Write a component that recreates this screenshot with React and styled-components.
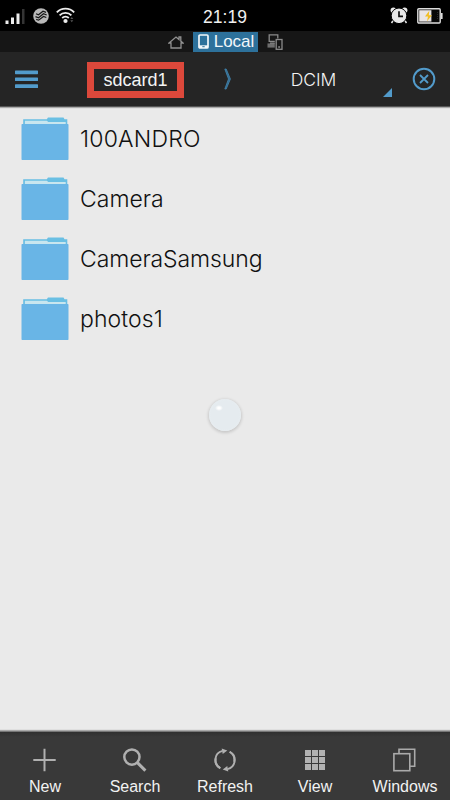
import React, { useState } from 'react';
import styled, { createGlobalStyle } from 'styled-components';

const GlobalStyle = createGlobalStyle`
  body {
    margin: 0;
    background: #eaeaea;
    font-family: 'Liberation Sans', Arial, sans-serif;
  }
`;

// Styled components
const Screen = styled.div`
  display: flex;
  flex-direction: column;
  width: 450px;
  height: 800px;
  overflow: hidden;
  background: #eaeaea;
  position: relative;
`;

const StatusBar = styled.header`
  display: grid;
  grid-template-columns: 1fr auto 1fr;
  align-items: center;
  height: 31px;
  box-sizing: border-box;
  background: #000;
  color: #f0f0f0;
`;

const StatusIcons = styled.div`
  display: flex;
  align-items: center;
  justify-content: ${(props) => (props.$end ? 'flex-end' : 'flex-start')};
  gap: ${(props) => (props.$end ? '9px' : '7px')};
  padding: ${(props) => (props.$end ? '0 7px 0 0' : '0 0 0 5px')};
`;

const Clock = styled.span`
  font-size: 17.5px;
  line-height: 20px;
  padding-top: 3px;
`;

const TabStrip = styled.nav`
  display: flex;
  justify-content: center;
  align-items: center;
  height: 21px;
  background: #161616;
`;

const Tab = styled.button`
  display: flex;
  align-items: center;
  justify-content: center;
  gap: 5px;
  width: ${(props) => props.$width};
  height: 20px;
  padding: ${(props) => props.$padding || '0'};
  border: none;
  background: ${(props) => (props.$active ? '#2d719b' : 'transparent')};
  color: #f2f7fa;
  font-family: inherit;
  font-size: 17px;
  line-height: 20px;
`;

const Toolbar = styled.div`
  display: grid;
  grid-template-columns: 52px 167px 16px 157px 58px;
  align-items: center;
  height: 54px;
  background: #252525;
  border-bottom: 1px solid #555;
  box-shadow: 0 1px 1px #aaa;
`;

const ToolButton = styled.button`
  display: flex;
  border: none;
  background: none;
  padding: ${(props) => props.$padding || '0'};
`;

const Crumb = styled.div`
  display: grid;
  grid-template-columns: 1fr auto 1fr;
  align-items: center;
  height: 54px;
  color: #f4f4f4;
  font-size: 18px;
`;

const CrumbName = styled.span`
  grid-column: 2;
  padding-top: 1px;
  font-family: Inter, 'Liberation Sans', sans-serif;
  font-size: 17.5px;
  font-weight: 300;
  line-height: 22px;
`;

const MarkedName = styled.span`
  grid-column: 2;
  box-sizing: border-box;
  width: 97px;
  height: 36px;
  margin-top: 2px;
  border: 7px solid #dc483b;
  line-height: 22px;
  text-align: center;
`;

const Corner = styled.span`
  grid-column: 3;
  justify-self: end;
  align-self: end;
  margin-bottom: 9px;
  border-left: 9px solid transparent;
  border-bottom: 9px solid #529bcb;
`;

const FileList = styled.ul`
  flex: 1;
  margin: 0;
  padding: 2px 0 0;
  list-style: none;
`;

const FileRow = styled.li`
  display: flex;
  align-items: center;
  gap: 11px;
  height: 60px;
  padding-left: 21px;
`;

const FileName = styled.span`
  padding-bottom: 1px;
  font-family: Inter, 'Liberation Sans', sans-serif;
  font-size: 23px;
  font-weight: 300;
  line-height: 30px;
  letter-spacing: ${(props) => props.$spacing};
  color: #111;
`;

const TouchDot = styled.div`
  position: absolute;
  left: 209px;
  top: 399px;
  width: 32px;
  height: 32px;
  border-radius: 50%;
  background: radial-gradient(ellipse 4px 3px at 10px 9px, #fff 30%, transparent 100%),
    radial-gradient(circle, #e5ebef 60%, #e9f0f3 100%);
  box-shadow: 0 1px 3px 1px rgba(0, 0, 0, 0.14);
`;

const BottomBar = styled.footer`
  display: grid;
  grid-template-columns: repeat(5, 90px);
  height: 68px;
  background: linear-gradient(#303030, #393939 5px);
  border-top: 1px solid #777;
  box-shadow: 0 -1px 1px #aaa;
`;

const Action = styled.button`
  display: flex;
  flex-direction: column;
  align-items: center;
  justify-content: flex-start;
  border: none;
  background: none;
  padding: 16px 0 0;
  color: #f2f2f2;
  font-family: inherit;
  font-size: 16px;
  line-height: 20px;
  white-space: nowrap;

  svg {
    flex: none;
    margin-bottom: 5px;
  }
`;

// Status icons
const SignalIcon = () => (
  <svg width="21" height="18" viewBox="0 0 21 18">
    <path d="M.5 13.5h3V17h-3zM6 10.5h3V17H6zM11.5 6.5h3V17h-3z" fill="#ededed" />
    <path d="M17 2h2.5v15H17z" fill="#343434" />
  </svg>
);

const CarrierIcon = () => (
  <svg width="16" height="16" viewBox="0 0 16 16">
    <circle cx="8" cy="8" r="7.8" fill="#b8b8b8" />
    <path
      d="M3 5.7l2.5 1 4.5-3.5 3 1.2M2.5 8.6l3 1.1 5-4 3.2 1.3M3.2 11.4l2.4.8 4.9-3.7 2.8 1"
      fill="none"
      stroke="#161616"
      strokeWidth="1.2"
    />
  </svg>
);

const WifiIcon = () => (
  <svg width="19" height="17" viewBox="0 0 19 17">
    <g fill="none" stroke="#ececec" strokeWidth="1.8">
      <path d="M.8 5.4C5.5.4 13.5.4 18.2 5.4" />
      <path d="M3.6 8.3c3.2-3.2 8.6-3.2 11.8 0" />
      <path d="M6.2 11c1.8-1.8 4.8-1.8 6.6 0" />
    </g>
    <circle cx="9.5" cy="14" r="2.1" fill="#ececec" />
    <path d="M14.3 12l1.5-2 1.5 2zM14.3 13.3h3l-1.5 2z" fill="#555" />
  </svg>
);

const AlarmIcon = () => (
  <svg width="18" height="17" viewBox="0 0 18 17">
    <path d="M3.5 13l-2 3M14.5 13l2 3" stroke="#e8e8e8" strokeWidth="1.5" />
    <circle cx="3.4" cy="3.2" r="2.8" fill="#e8e8e8" />
    <circle cx="14.6" cy="3.2" r="2.8" fill="#e8e8e8" />
    <circle cx="9" cy="8.8" r="7.8" fill="#e8e8e8" stroke="#000" strokeWidth="1" />
    <path d="M9 4.2v5.2h4" fill="none" stroke="#111" strokeWidth="1.7" />
  </svg>
);

const BatteryIcon = () => (
  <svg width="26" height="16" viewBox="0 0 26 16">
    <rect x=".8" y=".8" width="22.4" height="14.2" rx="1" fill="#080808" stroke="#dedede" strokeWidth="1.4" />
    <path d="M2.2 2.2h12.2v11.4H2.2z" fill="#e9e5e5" />
    <path d="M24 5h1.6v6H24z" fill="#ddd" />
    <path d="M12.3 2.7L8 8.5h3l-1 4.7 5-6h-3.2z" fill="#f2bf22" />
    <path d="M20.6 4v8" stroke="#303030" strokeDasharray="1 1" />
  </svg>
);

// Tab icons
const HomeIcon = () => (
  <svg width="16" height="14" viewBox="0 0 16 14" fill="none" stroke="#909090" strokeWidth="1.3">
    <path d="M1 8l7-6 3 2.6V2h1.8v4.1L15 8h-2v5H3V8z" />
  </svg>
);

const PhoneIcon = () => (
  <svg width="11" height="15" viewBox="0 0 11 15">
    <rect x="1" y="1" width="9" height="13" rx="1" fill="none" stroke="#f2f7fa" strokeWidth="1.7" />
    <path d="M1 11.3h9V14H1z" fill="#f2f7fa" />
    <path d="M4.3 12.7h2.4" stroke="#2d719b" />
  </svg>
);

const NetworkIcon = () => (
  <svg width="16" height="16" viewBox="0 0 16 16" fill="none" stroke="#8a8a8a" strokeWidth="1.3">
    <path d="M7.8 7.3H2.2V.8h8.6v3.7" />
    <rect x="9.2" y="5.5" width="5.8" height="9.8" />
    <path d="M.5 11.5h7.3" strokeWidth="4.2" stroke="#6e6e6e" />
    <path d="M11.2 13h1.8M3 9.2h4.8" />
  </svg>
);

// Toolbar icons
const MenuIcon = () => (
  <svg width="23" height="19" viewBox="0 0 23 19" fill="#529bcb">
    <rect y=".5" width="23" height="3.7" rx=".6" />
    <rect y="7.4" width="23" height="3.7" rx=".6" />
    <rect y="14.3" width="23" height="3.7" rx=".6" />
  </svg>
);

const ChevronIcon = () => (
  <svg width="16" height="22" viewBox="0 0 16 22">
    <path d="M5.8 1h1.4l4.2 10L7.2 21H5.8L9.5 11z" fill="#33698c" stroke="#4287b1" strokeWidth=".8" />
  </svg>
);

const CloseIcon = () => (
  <svg width="24" height="24" viewBox="0 0 24 24" fill="none" stroke="#529bcb">
    <circle cx="12" cy="12" r="10.3" strokeWidth="2" />
    <path d="M8 8l8 8M16 8l-8 8" strokeWidth="1.8" />
  </svg>
);

const FolderIcon = () => (
  <svg width="48" height="44" viewBox="0 0 48 44">
    <path d="M2.2 9V2.2h23.6L27 .4h15.5l1 1.8h2.8V9z" fill="#6abfe3" />
    <path d="M3.9 8V3.8h21.9l1.5 1.1h17.4V8z" fill="#c8e6ef" />
    <rect x=".5" y="7" width="47" height="36" rx=".8" fill="#69b5e6" />
  </svg>
);

// Bottom bar icons
const PlusIcon = () => (
  <svg width="24" height="24" viewBox="0 0 24 24">
    <path d="M11.5.8v22.4M.3 12h22.4" stroke="#b0b0b0" strokeWidth="2" />
  </svg>
);

const SearchIcon = () => (
  <svg width="24" height="24" viewBox="0 0 24 24" fill="none" stroke="#b0b0b0">
    <circle cx="8.9" cy="9.1" r="7.6" strokeWidth="2.5" />
    <path d="M14.4 14.6l8 8" strokeWidth="3" />
  </svg>
);

const RefreshIcon = () => (
  <svg width="24" height="24" viewBox="0 0 24 24">
    <g fill="none" stroke="#b0b0b0" strokeWidth="1.9">
      <path d="M7.3 20.2A9.3 9.3 0 0 1 9.5 2.9" />
      <path d="M16.7 3.8A9.3 9.3 0 0 1 14.5 21.1" />
      <path d="M2.9 10.2A9.3 9.3 0 0 0 7.3 20.2M21.1 13.8A9.3 9.3 0 0 0 16.7 3.8" />
    </g>
    <path d="M8.7.4l5.6 2-4.6 3.6zM15.3 23.6l-5.6-2 4.6-3.6z" fill="#b0b0b0" />
  </svg>
);

const GridIcon = () => (
  <svg width="24" height="24" viewBox="0 0 24 24" fill="#b2b2b2">
    {[2, 9, 16].map((y) => [2, 9, 16].map((x) => <rect key={`${x}-${y}`} x={x} y={y} width="6" height="6" />))}
  </svg>
);

const WindowsIcon = () => (
  <svg width="24" height="24" viewBox="0 0 24 24" fill="none" stroke="#aaa" strokeWidth="1.6">
    <path d="M6 5.5V1.2h15.7v17h-4.6" />
    <rect x=".9" y="5.7" width="15.9" height="17" />
  </svg>
);

const folders = [
  { name: '100ANDRO', spacing: '0.2px' },
  { name: 'Camera', spacing: '0px' },
  { name: 'CameraSamsung', spacing: '-0.1px' },
  { name: 'photos1', spacing: '0.1px' },
];

const actions = [
  { label: 'New', Icon: PlusIcon },
  { label: 'Search', Icon: SearchIcon },
  { label: 'Refresh', Icon: RefreshIcon },
  { label: 'View', Icon: GridIcon },
  { label: 'Windows', Icon: WindowsIcon },
];

const App = () => {
  const [tab, setTab] = useState('local');

  return (
    <Screen>
      <GlobalStyle />
      <StatusBar>
        <StatusIcons>
          <SignalIcon />
          <CarrierIcon />
          <WifiIcon />
        </StatusIcons>
        <Clock>21:19</Clock>
        <StatusIcons $end>
          <AlarmIcon />
          <BatteryIcon />
        </StatusIcons>
      </StatusBar>

      <TabStrip>
        <Tab $width="34px" $active={tab === 'home'} onClick={() => setTab('home')}>
          <HomeIcon />
        </Tab>
        <Tab $width="65px" $padding="0 0 0 2px" $active={tab === 'local'} onClick={() => setTab('local')}>
          <PhoneIcon />
          Local
        </Tab>
        <Tab $width="34px" $active={tab === 'network'} onClick={() => setTab('network')}>
          <NetworkIcon />
        </Tab>
      </TabStrip>

      <Toolbar>
        <ToolButton $padding="0 0 0 15px">
          <MenuIcon />
        </ToolButton>
        <Crumb>
          <MarkedName>sdcard1</MarkedName>
        </Crumb>
        <ChevronIcon />
        <Crumb>
          <CrumbName>DCIM</CrumbName>
          <Corner />
        </Crumb>
        <ToolButton $padding="0 0 0 20px">
          <CloseIcon />
        </ToolButton>
      </Toolbar>

      <FileList>
        {folders.map((folder) => (
          <FileRow key={folder.name}>
            <FolderIcon />
            <FileName $spacing={folder.spacing}>{folder.name}</FileName>
          </FileRow>
        ))}
      </FileList>

      <TouchDot />

      <BottomBar>
        {actions.map(({ label, Icon }) => (
          <Action key={label}>
            <Icon />
            {label}
          </Action>
        ))}
      </BottomBar>
    </Screen>
  );
};

export default App;
